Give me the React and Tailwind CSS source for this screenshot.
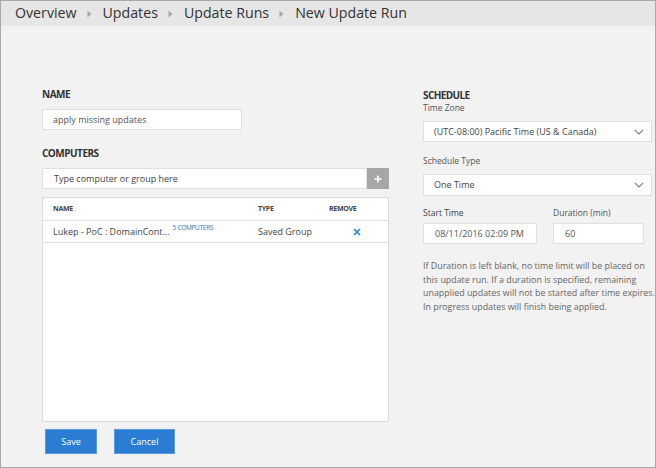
import React from "react";

const font = { fontFamily: '"Open Sans", "Noto Sans", sans-serif' };

function Caret() {
  return (
    <svg width="5" height="8" viewBox="0 0 5 8" className="ml-[10px] mr-[11px] mt-[1px]">
      <path d="M0.5 0.5 L4.5 4 L0.5 7.5 Z" fill="#a8a8a8" />
    </svg>
  );
}

function Chevron() {
  return (
    <svg width="10" height="6" viewBox="0 0 10 6">
      <path d="M0.8 0.8 L5 5 L9.2 0.8" fill="none" stroke="#777" strokeWidth="1.1" />
    </svg>
  );
}

export default function App() {
  return (
    <div
      className="w-[656px] h-[468px] border border-[#a9a9a9] bg-[#f2f2f2] flex flex-col overflow-hidden"
      style={font}
    >
      <div className="h-[25px] bg-[#e6e6e6] flex items-center pl-[14px] text-[14.2px] text-[#333] leading-none">
        <span>Overview</span>
        <Caret />
        <span>Updates</span>
        <Caret />
        <span>Update Runs</span>
        <Caret />
        <span>New Update Run</span>
      </div>
      <div className="flex flex-1 pl-[41px]">
        <div className="w-[347px] flex flex-col pt-[62px]">
          <div className="text-[10px] leading-[12px] font-bold text-[#333] tracking-[-0.5px]">NAME</div>
          <div className="mt-[9px] w-[200px] h-[21px] bg-white border border-[#e0e0e0] flex items-center pl-[10px] text-[9px] text-[#555]">
            apply missing updates
          </div>
          <div className="mt-[17px] text-[10px] leading-[12px] font-bold text-[#333] tracking-[-0.5px]">COMPUTERS</div>
          <div className="mt-[9px] flex h-[21px]">
            <div className="flex-1 bg-white border border-[#e0e0e0] flex items-center pl-[11px] text-[9px] text-[#444]">
              Type computer or group here
            </div>
            <div className="w-[22px] bg-[#a6a6a6] flex items-center justify-center">
              <svg width="8" height="8" viewBox="0 0 8 8">
                <path d="M4 0.5 V7.5 M0.5 4 H7.5" stroke="#fff" strokeWidth="1.6" />
              </svg>
            </div>
          </div>
          <div className="mt-[8px] h-[225px] bg-white border border-[#dcdcdc] flex flex-col">
            <div className="h-[23px] border-b border-[#e3e3e3] flex items-center text-[7px] font-bold text-[#444] tracking-[-0.3px]">
              <span className="pl-[10px] w-[215px]">NAME</span>
              <span className="w-[71px]">TYPE</span>
              <span>REMOVE</span>
            </div>
            <div className="h-[22px] border-b border-[#e3e3e3] flex items-center text-[9px] text-[#444]">
              <span className="pl-[10px] w-[215px] flex items-start">
                <span>Lukep - PoC : DomainCont...</span>
                <span className="ml-[3px] text-[6.5px] text-[#2b79c2] leading-none mt-[0px] tracking-[-0.3px]">5 COMPUTERS</span>
              </span>
              <span className="w-[95px]">Saved Group</span>
              <svg width="8" height="8" viewBox="0 0 8 8">
                <path d="M1 1 L7 7 M7 1 L1 7" stroke="#2a86d8" strokeWidth="1.7" />
              </svg>
            </div>
          </div>
          <div className="mt-[7px] flex gap-[17px] pl-[3px]">
            <button className="w-[52px] h-[25px] bg-[#2b7cd3] border border-[#5a9be0] text-white text-[9px]">Save</button>
            <button className="w-[61px] h-[25px] bg-[#2b7cd3] border border-[#5a9be0] text-white text-[9px]">Cancel</button>
          </div>
        </div>
        <div className="ml-[34px] w-[229px] flex flex-col pt-[63px]">
          <div className="text-[10px] leading-[12px] font-bold text-[#333] tracking-[-0.6px]">SCHEDULE</div>
          <div className="mt-[1px] text-[8.5px] leading-[11px] text-[#555]">Time Zone</div>
          <div className="mt-[8px] h-[21px] bg-white border border-[#e0e0e0] flex items-center justify-between pl-[10px] pr-[7px] text-[9px] text-[#444]">
            <span>(UTC-08:00) Pacific Time (US &amp; Canada)</span>
            <Chevron />
          </div>
          <div className="mt-[13px] text-[8.5px] leading-[11px] text-[#555]">Schedule Type</div>
          <div className="mt-[8px] h-[22px] bg-white border border-[#e0e0e0] flex items-center justify-between pl-[10px] pr-[7px] text-[9px] text-[#444]">
            <span>One Time</span>
            <Chevron />
          </div>
          <div className="mt-[11px] flex text-[8.5px] leading-[11px] text-[#444]">
            <span className="w-[130px]">Start Time</span>
            <span className="text-[#555]">Duration (min)</span>
          </div>
          <div className="mt-[5px] flex">
            <div className="w-[114px] h-[21px] bg-white border border-[#e0e0e0] flex items-center pl-[11px] text-[9px] text-[#555]">
              08/11/2016 02:09 PM
            </div>
            <div className="ml-[16px] w-[91px] h-[21px] bg-white border border-[#e0e0e0] flex items-center pl-[11px] text-[9px] text-[#555]">
              60
            </div>
          </div>
          <p className="mt-[15px] text-[8.9px] leading-[13.5px] text-[#666] whitespace-nowrap">
            If Duration is left blank, no time limit will be placed on
            <br />
            this update run. If a duration is specified, remaining
            <br />
            unapplied updates will not be started after time expires.
            <br />
            In progress updates will finish being applied.
          </p>
        </div>
      </div>
    </div>
  );
}
